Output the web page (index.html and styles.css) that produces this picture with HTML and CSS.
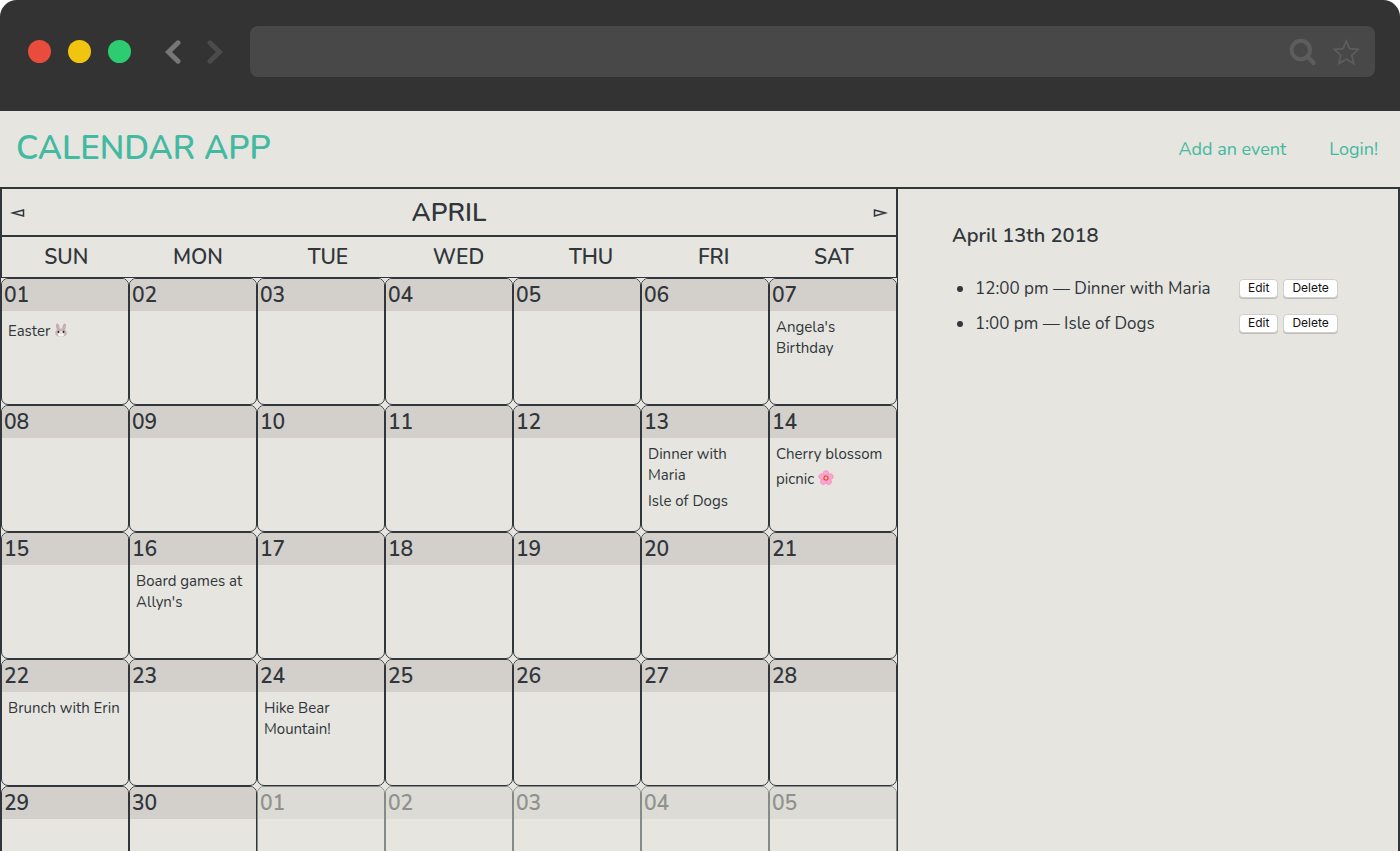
FILE: index.html
```html
<!DOCTYPE html>
<html lang="en">
<head>
<meta charset="utf-8">
<title>Calendar App</title>
<link rel="stylesheet" href="styles.css">
</head>
<body>
<div class="window">
  <div class="chrome">
    <div class="lights">
      <button class="light red" aria-label="Close"></button>
      <button class="light yellow" aria-label="Minimize"></button>
      <button class="light green" aria-label="Maximize"></button>
    </div>
    <div class="history">
      <button class="icon-button back" aria-label="Back"><svg width="17" height="26" viewBox="0 0 17 26"><path d="M13 3.800 3.500 13l9.500 9.200" /></svg></button>
      <button class="icon-button forward" aria-label="Forward"><svg width="17" height="26" viewBox="0 0 17 26"><path d="m4 3.800 9.500 9.200L4 22.200" /></svg></button>
    </div>
    <div class="address">
      <input class="address-input" type="text" aria-label="Address">
      <button class="icon-button tool" aria-label="Search"><svg width="28" height="28" viewBox="0 0 28 28"><circle cx="12.800" cy="12" r="9.200" stroke-width="4"/><path d="m19.800 19 5.700 6" stroke-width="4.500" stroke-linecap="round"/></svg></button>
      <button class="icon-button tool" aria-label="Bookmark"><svg width="28" height="28" viewBox="0 0 28 28"><path d="m14.300 3 3.300 7.600 8.700.8-6.600 5.900 2.100 8.300-7.500-4.300-7.500 4.200 2-8.200-6.600-5.900 8.800-.8z" stroke-width="1.700"/></svg></button>
    </div>
  </div>

  <header class="site-header">
    <h1 class="brand">CALENDAR APP</h1>
    <nav class="nav">
      <a href="#add">Add an event</a>
      <a href="#login">Login!</a>
    </nav>
  </header>

  <main class="main">
    <section class="calendar">
      <div class="month">
        <button class="icon-button step" aria-label="Previous month"><svg width="16" height="12" viewBox="0 0 16 12"><path d="M2.500 6 13.500 3v6z"/></svg></button>
        <h2 class="month-name">APRIL</h2>
        <button class="icon-button step" aria-label="Next month"><svg width="16" height="12" viewBox="0 0 16 12"><path d="M13.500 6 2.500 3v6z"/></svg></button>
      </div>
      <div class="weekdays">
        <span>SUN</span><span>MON</span><span>TUE</span><span>WED</span><span>THU</span><span>FRI</span><span>SAT</span>
      </div>
      <div class="days">
        <div class="day"><div class="num">01</div><div class="event with-icon">Easter
          <svg class="emoji" role="img" aria-label="rabbit" viewBox="0 0 14 14"><path d="M3.200 7C1.400 3.500 2 .5 3.200.5S5.800 3 5.600 6.500zM10.800 7C12.600 3.500 12 .5 10.800.5S8.200 3 8.400 6.500z" fill="#b9aaaa"/><path d="M3.700 6C2.700 3.800 2.900 1.700 3.400 1.700S4.900 4 4.900 6zM10.300 6c1-2.200.8-4.300.3-4.300S9.100 4 9.100 6z" fill="#dfa9b6"/><path d="M7 5.500c3.500 0 5.800 1.900 5.800 4.500S10.500 13.800 7 13.800 1.200 12.600 1.200 10 3.500 5.500 7 5.500z" fill="#c3b6b5"/><ellipse cx="7" cy="11" rx="3.200" ry="2.700" fill="#f6f2f0"/><ellipse cx="4.500" cy="9" rx=".9" ry="1.200" fill="#332b2d"/><ellipse cx="9.500" cy="9" rx=".9" ry="1.200" fill="#332b2d"/><path d="M6.200 10.300h1.600L7 11.300z" fill="#d07888"/></svg></div></div>
        <div class="day"><div class="num">02</div></div>
        <div class="day"><div class="num">03</div></div>
        <div class="day"><div class="num">04</div></div>
        <div class="day"><div class="num">05</div></div>
        <div class="day"><div class="num">06</div></div>
        <div class="day"><div class="num">07</div><div class="event">Angela's Birthday</div></div>
        <div class="day"><div class="num">08</div></div>
        <div class="day"><div class="num">09</div></div>
        <div class="day"><div class="num">10</div></div>
        <div class="day"><div class="num">11</div></div>
        <div class="day"><div class="num">12</div></div>
        <div class="day"><div class="num">13</div><div class="event">Dinner with Maria</div><div class="event">Isle of Dogs</div></div>
        <div class="day"><div class="num">14</div><div class="event">Cherry blossom <span class="tall">picnic
          <svg class="emoji flower" role="img" aria-label="cherry blossom" viewBox="0 0 16 16"><g fill="#fba6cf" stroke="#ee82b5" stroke-width=".5"><ellipse cx="8" cy="4" rx="2.900" ry="3.500"/><ellipse cx="8" cy="4" rx="2.900" ry="3.500" transform="rotate(72 8 8)"/><ellipse cx="8" cy="4" rx="2.900" ry="3.500" transform="rotate(144 8 8)"/><ellipse cx="8" cy="4" rx="2.900" ry="3.500" transform="rotate(216 8 8)"/><ellipse cx="8" cy="4" rx="2.900" ry="3.500" transform="rotate(288 8 8)"/></g><circle cx="8" cy="8" r="2.600" fill="#e4376f"/><circle cx="8" cy="8" r="1.500" fill="#fbd54b"/></svg></span></div></div>
        <div class="day"><div class="num">15</div></div>
        <div class="day"><div class="num">16</div><div class="event">Board games at Allyn's</div></div>
        <div class="day"><div class="num">17</div></div>
        <div class="day"><div class="num">18</div></div>
        <div class="day"><div class="num">19</div></div>
        <div class="day"><div class="num">20</div></div>
        <div class="day"><div class="num">21</div></div>
        <div class="day"><div class="num">22</div><div class="event">Brunch with Erin</div></div>
        <div class="day"><div class="num">23</div></div>
        <div class="day"><div class="num">24</div><div class="event">Hike Bear Mountain!</div></div>
        <div class="day"><div class="num">25</div></div>
        <div class="day"><div class="num">26</div></div>
        <div class="day"><div class="num">27</div></div>
        <div class="day"><div class="num">28</div></div>
        <div class="day"><div class="num">29</div></div>
        <div class="day"><div class="num">30</div></div>
        <div class="day other"><div class="num">01</div></div>
        <div class="day other"><div class="num">02</div></div>
        <div class="day other"><div class="num">03</div></div>
        <div class="day other"><div class="num">04</div></div>
        <div class="day other"><div class="num">05</div></div>
      </div>
    </section>

    <section class="agenda">
      <h3 class="agenda-date">April 13th 2018</h3>
      <ul class="agenda-list">
        <li><span>12:00 pm — Dinner with Maria</span><button class="action">Edit</button><button class="action">Delete</button></li>
        <li><span>1:00 pm — Isle of Dogs</span><button class="action">Edit</button><button class="action">Delete</button></li>
      </ul>
    </section>
  </main>
</div>
</body>
</html>
```

FILE: styles.css
```css
* { box-sizing: border-box; }

body {
  margin: 0;
  background: #fff;
  color: #30363b;
  font-family: Nunito, Lato, sans-serif;
}

h1, h2, h3, ul { margin: 0; padding: 0; }

button { font: inherit; cursor: pointer; }

.window {
  display: flex;
  flex-direction: column;
  height: 100vh;
  overflow: hidden;
  border-radius: 17px 17px 0 0;
  background: #e6e5df;
}

/* Browser frame */
.chrome {
  display: flex;
  align-items: flex-start;
  flex: none;
  height: 111px;
  padding: 26px 25px 0 28px;
  background: #333;
}

.lights, .history {
  display: flex;
  align-items: center;
  height: 51px;
}

.lights { gap: 17px; }

.light {
  width: 23px;
  height: 23px;
  padding: 0;
  border: 0;
  border-radius: 50%;
}

.red { background: #e94b3c; }
.yellow { background: #f1c40f; }
.green { background: #2ecc71; }

.history { gap: 24px; margin: 0 27px 0 34px; }

.icon-button {
  display: flex;
  padding: 0;
  border: 0;
  background: none;
}

.icon-button svg { fill: none; }

.history svg {
  stroke: #777;
  stroke-width: 5;
  stroke-linecap: round;
  stroke-linejoin: miter;
}

.history .forward svg { stroke: #4b4b4b; }

.address {
  display: flex;
  flex: 1;
  align-items: center;
  gap: 16px;
  height: 51px;
  padding-right: 15px;
  border-radius: 8px;
  background: #484848;
}

.address-input {
  flex: 1;
  min-width: 0;
  height: 100%;
  padding: 0 16px;
  border: 0;
  outline: 0;
  background: transparent;
  color: #ccc;
  font-size: 18px;
}

.tool svg { stroke: #5d5d5d; }

/* Site header */
.site-header {
  display: flex;
  flex: none;
  align-items: center;
  justify-content: space-between;
  height: 76px;
  padding: 0 22px 0 16px;
}

.brand {
  color: #43b9a2;
  font-size: 33px;
  font-weight: 600;
  line-height: 40px;
}

.nav { display: flex; gap: 43px; }

.nav a {
  color: #43b9a2;
  font-size: 18px;
  text-decoration: none;
}

/* Calendar */
.main {
  display: grid;
  grid-template-columns: 898fr 502fr;
  flex: 1;
  min-height: 0;
  border-top: 2px solid #30363b;
}

.calendar {
  border: solid #30363b;
  border-width: 0 1px;
}

.month, .weekdays {
  border: solid #30363b;
  border-width: 0 1px;
}

.month {
  display: flex;
  align-items: center;
  justify-content: space-between;
  height: 48px;
  padding: 1px 8px 0;
  border-bottom-width: 2px;
}

.month-name {
  font-size: 26px;
  font-weight: 600;
}

.step svg { stroke: #30363b; stroke-width: 1.5; }

.weekdays {
  display: flex;
  justify-content: space-around;
  height: 41px;
  border-bottom-width: 1px;
  font-size: 21px;
  font-weight: 600;
  line-height: 40px;
}

.days {
  display: grid;
  grid-template-columns: repeat(7, minmax(0, 1fr));
  grid-auto-rows: 127px;
}

.day {
  overflow: hidden;
  border: 1px solid #30363b;
  border-radius: 7px;
}

.num {
  height: 32px;
  margin-bottom: 6px;
  padding-left: 2px;
  background: #d3d0cb;
  font-size: 21px;
  font-weight: 600;
  line-height: 32px;
}

.event {
  margin-bottom: 5px;
  padding-left: 6px;
  font-size: 15px;
  line-height: 21px;
}

.with-icon { line-height: 28px; }

.tall { line-height: 28px; }

.emoji {
  width: 14px;
  height: 14px;
  vertical-align: -1px;
}

.flower {
  width: 16px;
  height: 16px;
  vertical-align: -2px;
}

.other { border-color: #868a89; }

.other .num { background: #dcdbd5; color: #8f918e; }

/* Agenda */
.agenda {
  padding: 33px 54px;
  border-right: 2px solid #30363b;
}

.agenda-date {
  margin-bottom: 25px;
  font-size: 20px;
  font-weight: 600;
  line-height: 28px;
}

.agenda-list { padding-left: 23px; font-size: 17px; line-height: 27px; }

.agenda-list li { margin-bottom: 8px; }

.agenda-list span {
  display: inline-block;
  width: 264px;
}

.action {
  height: 19px;
  margin-right: 5px;
  padding: 0 8px;
  border: 1px solid #d0cfcb;
  border-radius: 4px;
  background: #fff;
  box-shadow: 0 1px 0 #bdbcb8;
  color: #111;
  font: 12px/16px Inter, sans-serif;
  vertical-align: 2px;
}
```
